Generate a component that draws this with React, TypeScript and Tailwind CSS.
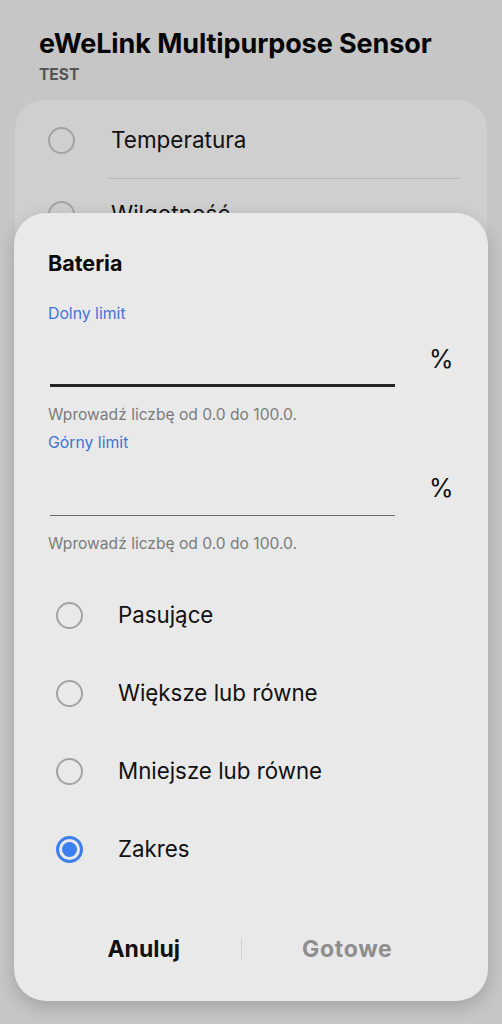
import React from "react";

const FONT = { fontFamily: "Inter, Roboto, 'Noto Sans', sans-serif" };

function Radio({ checked }: { checked?: boolean }) {
  if (checked) {
    return (
      <span className="flex h-[27px] w-[27px] shrink-0 items-center justify-center rounded-full border-[3px] border-[#3d7ff0]">
        <span className="h-[15px] w-[15px] rounded-full bg-[#3d7ff0]" />
      </span>
    );
  }
  return <span className="h-[27px] w-[27px] shrink-0 rounded-full border-2 border-[#a3a3a3]" />;
}

function LimitField({ label, active }: { label: string; active?: boolean }) {
  return (
    <div>
      <div className="text-[15.8px] leading-[20px] text-[#3f74d6]">{label}</div>
      <div className="mt-[23px] flex items-end">
        <div
          className={
            active
              ? "ml-[2px] h-[23px] w-[345px] border-b-[3px] border-[#252525]"
              : "ml-[2px] h-[23px] w-[345px] border-b border-[#6b6b6b]"
          }
        />
        <span className="mb-[15px] ml-[34px] text-[25px] leading-none text-[#111]">%</span>
      </div>
      <div className="mt-[18px] text-[15.6px] leading-[20px] text-[#7c7c7c]">
        Wprowadź liczbę od 0.0 do 100.0.
      </div>
    </div>
  );
}

export default function App() {
  const options = [
    { label: "Pasujące" },
    { label: "Większe lub równe" },
    { label: "Mniejsze lub równe" },
    { label: "Zakres", checked: true },
  ];

  return (
    <div className="relative h-[1024px] w-[502px] overflow-hidden bg-[#c6c6c6]" style={FONT}>
      {/* Background screen (dimmed) */}
      <div className="px-[39px] pt-[28px]">
        <h1 className="text-[27px] font-bold leading-[32px] tracking-[-0.1px] text-[#050505]">
          eWeLink Multipurpose Sensor
        </h1>
        <div className="mt-[5px] text-[15.5px] font-bold leading-[20px] text-[#555]">TEST</div>
      </div>
      <div className="mx-[15px] mt-[15px] h-[400px] rounded-[30px] bg-[#cfcfcf]">
        <div className="flex h-[78px] items-center pl-[33px] pt-[2px]">
          <Radio />
          <span className="ml-[36px] text-[22.5px] leading-[28px] text-[#111]">Temperatura</span>
        </div>
        <div className="ml-[94px] mr-[27px] h-px bg-[#b5b5b5]" />
        <div className="flex h-[60px] items-center pl-[33px] pt-[10px]">
          <Radio />
          <span className="ml-[36px] text-[22.5px] leading-[28px] text-[#111]">Wilgotność</span>
        </div>
      </div>

      {/* Dialog */}
      <div className="absolute left-[14px] top-[213px] h-[788px] w-[474px] rounded-[32px] bg-[#e9e9e9] shadow-[0_6px_18px_rgba(0,0,0,0.18)]">
        <div className="px-[34px] pt-[37px]">
          <div className="text-[21.5px] font-bold leading-[26px] text-[#0a0a0a]">Bateria</div>
          <div className="mt-[28px]">
            <LimitField label="Dolny limit" active />
          </div>
          <div className="mt-[8px]">
            <LimitField label="Górny limit" />
          </div>
        </div>

        <div className="mt-[22px] flex flex-col pl-[42px]">
          {options.map((o) => (
            <div key={o.label} className="flex h-[78px] items-center">
              <Radio checked={o.checked} />
              <span className="ml-[35px] text-[22.3px] leading-[28px] text-[#111]">{o.label}</span>
            </div>
          ))}
        </div>

        <div className="mt-[47px] flex items-center">
          <div className="flex w-[227px] justify-end pr-[61px]">
            <span className="text-[23px] font-bold leading-[28px] text-[#111]">Anuluj</span>
          </div>
          <div className="h-[22px] w-px bg-[#d0d0d0]" />
          <div className="flex flex-1 justify-start pl-[60px]">
            <span className="text-[23px] font-bold leading-[28px] tracking-[0.7px] text-[#8e8e8e]">
              Gotowe
            </span>
          </div>
        </div>
      </div>
    </div>
  );
}
